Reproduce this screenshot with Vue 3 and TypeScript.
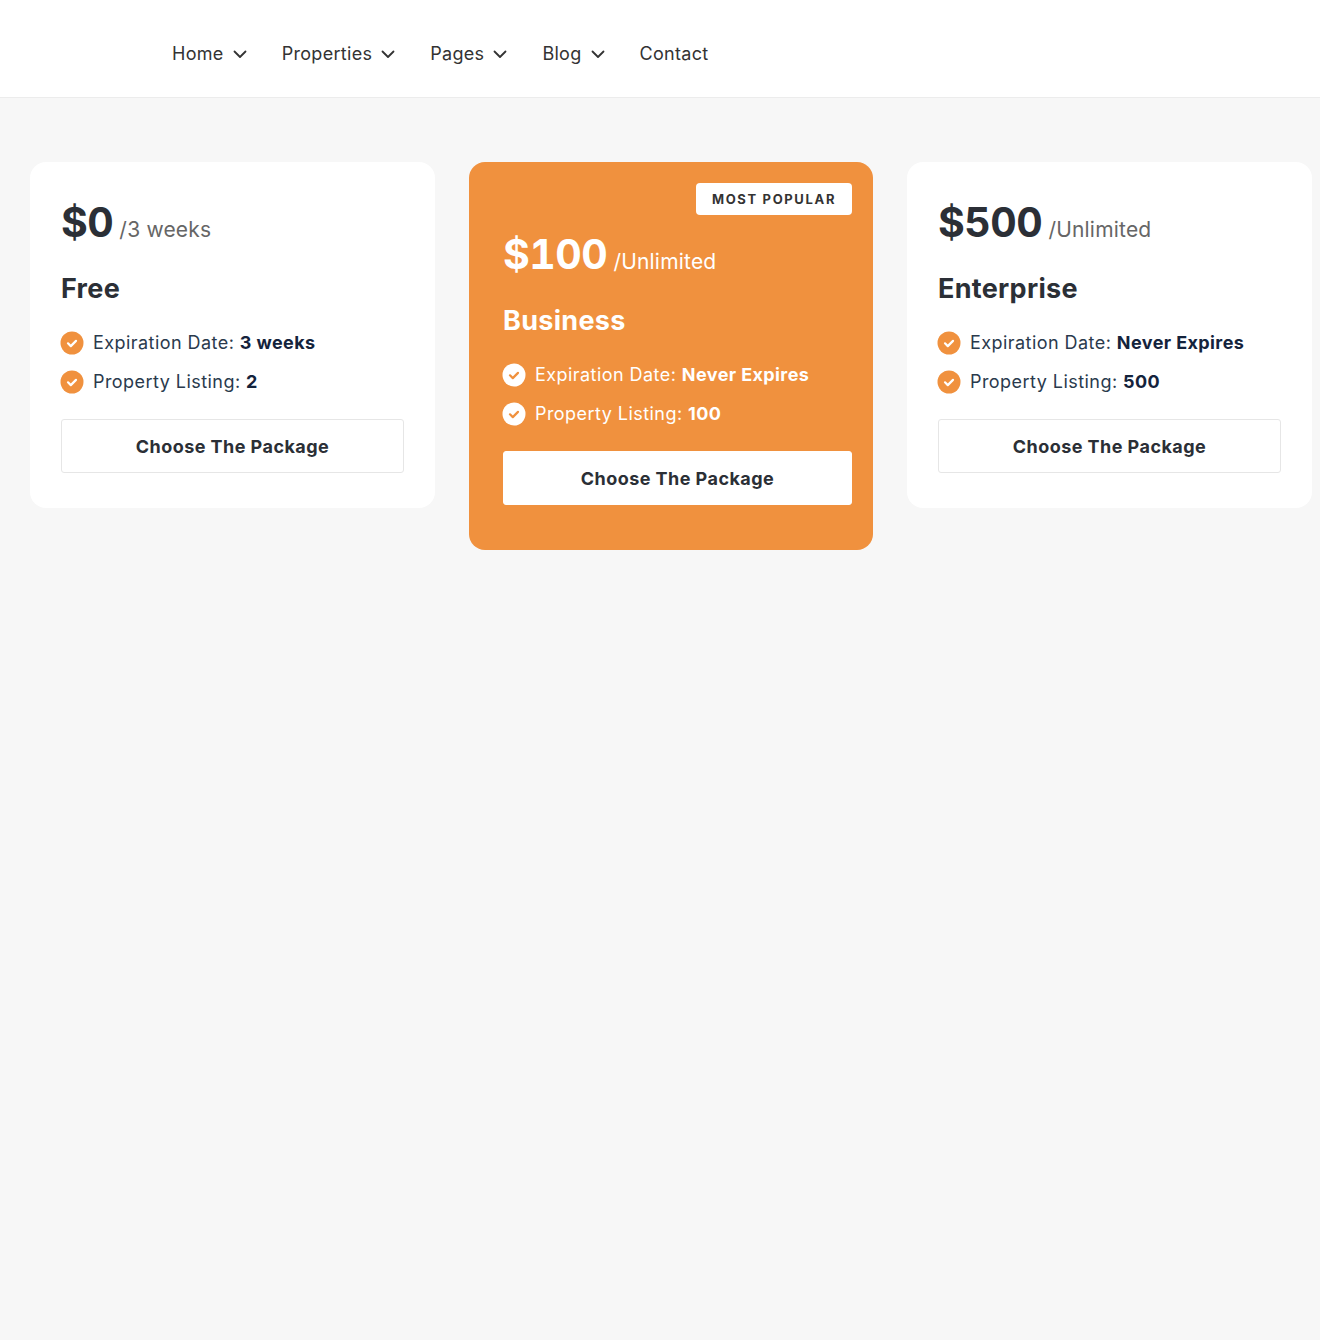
<template>
  <div class="page">
    <header class="topbar">
      <nav class="nav">
        <a v-for="item in navItems" :key="item.label" class="nav-item">
          {{ item.label }}
          <svg v-if="item.caret" class="caret" width="14" height="14" viewBox="0 0 14 14" fill="none">
            <path d="M1.5 4.5 7 10l5.5-5.5" stroke="#333" stroke-width="1.8" stroke-linecap="round" stroke-linejoin="round" />
          </svg>
        </a>
      </nav>
    </header>

    <section class="plans">
      <article v-for="plan in plans" :key="plan.name" class="plan" :class="{ featured: plan.featured }">
        <span v-if="plan.featured" class="badge">MOST POPULAR</span>
        <div class="price">
          <strong>{{ plan.price }}</strong>
          <span>{{ plan.period }}</span>
        </div>
        <h3>{{ plan.name }}</h3>
        <ul>
          <li v-for="row in plan.rows" :key="row.label">
            <svg class="check" width="24" height="24" viewBox="0 0 24 24">
              <circle cx="12" cy="12" r="11.5" :fill="plan.featured ? '#fff' : '#f0913e'" />
              <path d="M8 12.3l2.8 2.8 5.2-5.2" fill="none" :stroke="plan.featured ? '#f0913e' : '#fff'" stroke-width="2.2" stroke-linecap="round" stroke-linejoin="round" />
            </svg>
            <span>{{ row.label }}: <b>{{ row.value }}</b></span>
          </li>
        </ul>
        <button class="choose">Choose The Package</button>
      </article>
    </section>
  </div>
</template>

<script setup lang="ts">
interface NavItem {
  label: string;
  caret: boolean;
}

interface Plan {
  price: string;
  period: string;
  name: string;
  featured: boolean;
  rows: { label: string; value: string }[];
}

const navItems: NavItem[] = [
  { label: "Home", caret: true },
  { label: "Properties", caret: true },
  { label: "Pages", caret: true },
  { label: "Blog", caret: true },
  { label: "Contact", caret: false },
];

const plans: Plan[] = [
  {
    price: "$0",
    period: "/3 weeks",
    name: "Free",
    featured: false,
    rows: [
      { label: "Expiration Date", value: "3 weeks" },
      { label: "Property Listing", value: "2" },
    ],
  },
  {
    price: "$100",
    period: "/Unlimited",
    name: "Business",
    featured: true,
    rows: [
      { label: "Expiration Date", value: "Never Expires" },
      { label: "Property Listing", value: "100" },
    ],
  },
  {
    price: "$500",
    period: "/Unlimited",
    name: "Enterprise",
    featured: false,
    rows: [
      { label: "Expiration Date", value: "Never Expires" },
      { label: "Property Listing", value: "500" },
    ],
  },
];
</script>

<style>
body {
  background: #f7f7f7;
}
</style>

<style scoped>
.page {
  min-height: 1340px;
  background: #f7f7f7;
  font-family: "Inter", "Lato", sans-serif;
  color: #2b2f36;
}

.topbar {
  height: 97px;
  background: #fff;
  border-bottom: 1px solid #ececec;
}

.nav {
  display: flex;
  gap: 35px;
  padding: 42px 0 0 172px;
}

.nav-item {
  display: flex;
  align-items: center;
  gap: 9px;
  font-size: 18px;
  letter-spacing: 0.3px;
  line-height: 24px;
  color: #333;
}

.plans {
  display: grid;
  grid-template-columns: 405px 404px 405px;
  gap: 34px;
  align-items: start;
  padding: 64px 0 0 30px;
}

.plan {
  position: relative;
  padding: 31px 31px 35px;
  background: #fff;
  border-radius: 16px;
}

.plan.featured {
  padding: 63px 21px 45px 34px;
  background: #f0913e;
  color: #fff;
}

.badge {
  position: absolute;
  top: 21px;
  right: 21px;
  width: 156px;
  height: 32px;
  background: #fff;
  border-radius: 4px;
  color: #333;
  font-size: 13px;
  font-weight: 700;
  letter-spacing: 1.65px;
  line-height: 33px;
  text-align: center;
}

.price {
  display: flex;
  align-items: baseline;
  gap: 6px;
  height: 58px;
}

.price strong {
  font-size: 41px;
  font-variant-numeric: tabular-nums;
  letter-spacing: -0.5px;
  line-height: 58px;
  font-weight: 700;
}

.price span {
  font-size: 21px;
  letter-spacing: 0.2px;
  color: #666;
}

.featured .price span {
  color: #fff;
}

h3 {
  margin: 18px 0 0;
  font-size: 27px;
  letter-spacing: 0.3px;
  line-height: 40px;
  font-weight: 700;
}

ul {
  margin: 14px 0 0;
  padding: 0;
  list-style: none;
}

li {
  display: flex;
  align-items: center;
  gap: 9px;
  height: 39px;
  font-size: 18px;
  letter-spacing: 0.45px;
  color: #2a3a4d;
}

.featured li {
  color: #fff;
}

li b {
  color: #14233c;
  font-weight: 700;
  letter-spacing: 0.4px;
}

.featured li b {
  color: #fff;
}

.check {
  flex: none;
  margin-left: -1px;
}

.choose {
  display: block;
  width: 100%;
  height: 54px;
  margin-top: 18px;
  background: #fff;
  border: 1px solid #e6e6e6;
  border-radius: 3px;
  color: #2b2f36;
  font-family: inherit;
  font-size: 18px;
  letter-spacing: 0.45px;
  font-weight: 700;
}

.featured .choose {
  border-color: #fff;
}
</style>
